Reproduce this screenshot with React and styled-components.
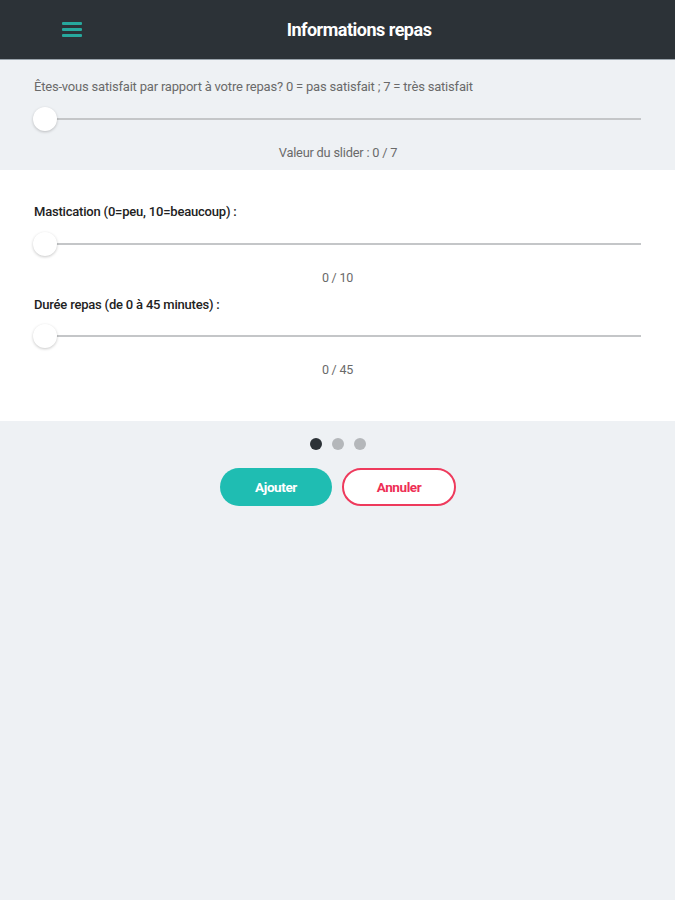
import React from "react";
import styled, { createGlobalStyle } from "styled-components";

const FONT = `Roboto, "Liberation Sans", sans-serif`;

const Global = createGlobalStyle`
  html, body { margin: 0; padding: 0; background: #eef1f4; }
  body { font-family: ${FONT}; }
  #root { min-height: 900px; }
`;

const Page = styled.div`
  width: 675px;
  min-height: 900px;
  background: #eef1f4;
  display: flex;
  flex-direction: column;
`;

const TopBar = styled.header`
  height: 59px;
  background: #2c3237;
  display: flex;
  align-items: center;
  position: relative;
  border-bottom: 1px solid #9aa3ab;
`;

const MenuButton = styled.div`
  width: 20px;
  margin-left: 62px;
  display: flex;
  flex-direction: column;
  gap: 3px;
  span {
    display: block;
    height: 3px;
    background: #27a89d;
    border-radius: 1px;
  }
`;

const Title = styled.h1`
  position: absolute;
  left: 0;
  right: 0;
  text-align: center;
  margin: 0;
  padding-left: 43px;
  font-family: ${FONT};
  font-weight: 700;
  font-size: 18px;
  letter-spacing: -0.5px;
  color: #ffffff;
  pointer-events: none;
`;

const Section = styled.section`
  background: ${(p) => (p.$white ? "#ffffff" : "#eef1f4")};
  padding: ${(p) => p.$pad};
  display: flex;
  flex-direction: column;
`;

const Question = styled.div`
  font-size: 13px;
  letter-spacing: -0.2px;
  color: ${(p) => (p.$strong ? "#222" : "#6a6a6a")};
  font-weight: ${(p) => (p.$strong ? 500 : 400)};
  margin-left: 34px;
  line-height: 16px;
  margin-top: ${(p) => p.$top || 0}px;
`;

const SliderRow = styled.div`
  position: relative;
  margin-top: ${(p) => p.$top}px;
  margin-left: 33px;
  width: 608px;
  height: 24px;
  display: flex;
  align-items: center;
`;

const Track = styled.div`
  position: absolute;
  left: 12px;
  right: 0;
  top: 11px;
  height: 2px;
  background: #c4c6c8;
`;

const Thumb = styled.div`
  position: relative;
  width: 24px;
  height: 24px;
  border-radius: 50%;
  background: #fff;
  box-shadow: 0 1px 3px rgba(0, 0, 0, 0.22);
`;

const ValueText = styled.div`
  text-align: center;
  font-size: ${(p) => p.$size || 12.5}px;
  letter-spacing: -0.2px;
  color: #6a6a6a;
  line-height: 16px;
  margin-top: ${(p) => p.$top}px;
  margin-left: ${(p) => p.$shift || 0}px;
`;

const Dots = styled.div`
  display: flex;
  justify-content: center;
  gap: 10px;
  margin-top: 17px;
  margin-left: 1px;
`;

const Dot = styled.span`
  width: 12px;
  height: 12px;
  border-radius: 50%;
  background: ${(p) => (p.$active ? "#2c3237" : "#b4b7ba")};
`;

const Buttons = styled.div`
  display: flex;
  justify-content: center;
  gap: 10px;
  margin-top: 18px;
  margin-left: 1px;
`;

const Button = styled.button`
  height: 38px;
  width: ${(p) => p.$w}px;
  border-radius: 19px;
  font-family: ${FONT};
  font-weight: 700;
  font-size: 13.5px;
  letter-spacing: -0.4px;
  cursor: pointer;
  background: ${(p) => (p.$outline ? "#ffffff" : "#1fbdb2")};
  color: ${(p) => (p.$outline ? "#ee2f55" : "#ffffff")};
  border: ${(p) => (p.$outline ? "2px solid #ee3a5c" : "none")};
`;

function Slider({ top }) {
  return (
    <SliderRow $top={top}>
      <Track />
      <Thumb />
    </SliderRow>
  );
}

export default function App() {
  return (
    <Page>
      <Global />
      <TopBar>
        <MenuButton>
          <span />
          <span />
          <span />
        </MenuButton>
        <Title>Informations repas</Title>
      </TopBar>
      <Section $pad="19px 0 9px">
        <Question>
          Êtes-vous satisfait par rapport à votre repas? 0 = pas satisfait ; 7 = très satisfait
        </Question>
        <Slider top={12} />
        <ValueText $shift={1} $top={14} $size={12.8}>
          Valeur du slider : 0 / 7
        </ValueText>
      </Section>
      <Section $white $pad="34px 0 43px">
        <Question $strong>Mastication (0=peu, 10=beaucoup) :</Question>
        <Slider top={12} />
        <ValueText $top={14}>0 / 10</ValueText>
        <Question $strong $top={11}>
          Durée repas (de 0 à 45 minutes) :
        </Question>
        <Slider top={11} />
        <ValueText $top={14}>0 / 45</ValueText>
      </Section>
      <Dots>
        <Dot $active />
        <Dot />
        <Dot />
      </Dots>
      <Buttons>
        <Button $w={112}>Ajouter</Button>
        <Button $w={114} $outline>
          Annuler
        </Button>
      </Buttons>
    </Page>
  );
}
